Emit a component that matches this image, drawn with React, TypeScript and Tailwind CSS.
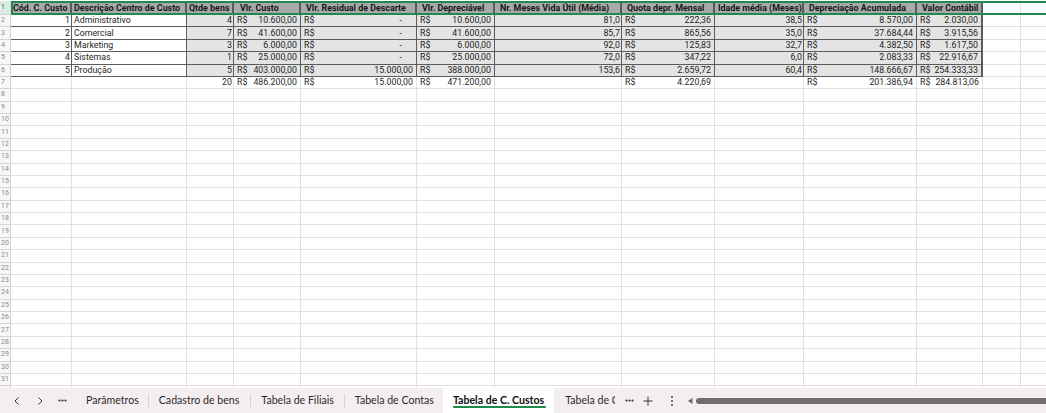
import React from "react";

const cols =
  "grid grid-cols-[11px_61px_115px_47px_67px_116px_78px_127px_93px_89px_113px_66px_38px_1fr]";

type Row = {
  cod: string;
  desc: string;
  qtde: string;
  custo: string;
  residual: string;
  deprec: string;
  meses: string;
  quota: string;
  idade: string;
  acum: string;
  contabil: string;
};

const rows: Row[] = [
  { cod: "1", desc: "Administrativo", qtde: "4", custo: "10.600,00", residual: "-", deprec: "10.600,00", meses: "81,0", quota: "222,36", idade: "38,5", acum: "8.570,00", contabil: "2.030,00" },
  { cod: "2", desc: "Comercial", qtde: "7", custo: "41.600,00", residual: "-", deprec: "41.600,00", meses: "85,7", quota: "865,56", idade: "35,0", acum: "37.684,44", contabil: "3.915,56" },
  { cod: "3", desc: "Marketing", qtde: "3", custo: "6.000,00", residual: "-", deprec: "6.000,00", meses: "92,0", quota: "125,83", idade: "32,7", acum: "4.382,50", contabil: "1.617,50" },
  { cod: "4", desc: "Sistemas", qtde: "1", custo: "25.000,00", residual: "-", deprec: "25.000,00", meses: "72,0", quota: "347,22", idade: "6,0", acum: "2.083,33", contabil: "22.916,67" },
  { cod: "5", desc: "Produção", qtde: "5", custo: "403.000,00", residual: "15.000,00", deprec: "388.000,00", meses: "153,6", quota: "2.659,72", idade: "60,4", acum: "148.666,67", contabil: "254.333,33" },
];

const headers = [
  { t: "Cód. C. Custo", p: "pl-[2px]" },
  { t: "Descrição Centro de Custo", p: "pl-[2px]" },
  { t: "Qtde bens", p: "pl-[2px]" },
  { t: "Vlr. Custo", p: "pl-[6px]" },
  { t: "Vlr. Residual de Descarte", p: "pl-[5px]" },
  { t: "Vlr. Depreciável", p: "pl-[5px]" },
  { t: "Nr. Meses Vida Útil (Média)", p: "pl-[5px]" },
  { t: "Quota depr. Mensal", p: "pl-[5px]" },
  { t: "Idade média (Meses)", p: "pl-[3px]" },
  { t: "Depreciação Acumulada", p: "pl-[5px]" },
  { t: "Valor Contábil", p: "pl-[5px]" },
];

function RowNum({ n, active }: { n: number; active?: boolean }) {
  return (
    <div
      className={
        "flex items-center pl-[1px] text-[7px] border-r border-b border-[#d4d4d4] " +
        (active ? "bg-[#dcebe1] text-[#1e7b45]" : "bg-[#f7f7f7] text-[#8a8a8a]")
      }
    >
      {n}
    </div>
  );
}

function Money({ v, dash, gray, total }: { v: string; dash?: boolean; gray?: boolean; total?: boolean }) {
  return (
    <div
      className={
        "flex justify-between items-center pl-[3px] pr-[3px] whitespace-nowrap " +
        (total ? "border-r border-b border-[#e2e2e2] " : "border-r border-b border-[#5c5c5c] ") +
        (gray ? "bg-[#e4e4e4]" : "")
      }
    >
      <span>R$</span>
      <span className={dash ? "pr-[11px]" : ""}>{v}</span>
    </div>
  );
}

function Num({ v, gray, left, total }: { v: string; gray?: boolean; left?: boolean; total?: boolean }) {
  return (
    <div
      className={
        "flex items-center whitespace-nowrap overflow-hidden " +
        (left ? "pl-[2px] " : "justify-end pr-[1px] ") +
        (total ? "border-r border-b border-[#e2e2e2] " : "border-r border-b border-[#5c5c5c] ") +
        (gray ? "bg-[#e4e4e4]" : "")
      }
    >
      {v}
    </div>
  );
}

function Blank() {
  return <div className="border-r border-b border-[#e2e2e2]" />;
}

function Dots() {
  return (
    <svg width="9" height="3" viewBox="0 0 9 3">
      <circle cx="1.5" cy="1.5" r="1.1" fill="#333" />
      <circle cx="4.5" cy="1.5" r="1.1" fill="#333" />
      <circle cx="7.5" cy="1.5" r="1.1" fill="#333" />
    </svg>
  );
}

export default function App() {
  const empty = Array.from({ length: 25 }, (_, i) => i + 8);
  return (
    <div
      className="w-[1046px] h-[413px] overflow-hidden bg-white flex flex-col text-[#1f1f1f]"
      style={{ fontFamily: "Roboto, 'Liberation Sans', sans-serif" }}
    >
      <div className="flex-1 overflow-hidden pt-[1px] text-[8.8px] leading-none">
        {/* header row */}
        <div className={cols + " h-[14px] relative"}>
          <RowNum n={1} active />
          {headers.map((h, i) => (
            <div
              key={i}
              className={
                "flex items-center font-bold text-[8.9px] whitespace-nowrap overflow-hidden bg-[#a9a9a9] text-[#161616] border-r-2 border-[#5a5a5a] " +
                h.p
              }
            >
              {h.t}
            </div>
          ))}
          <div className="bg-white border-r border-[#e2e2e2]" />
          <div className="bg-white" />
          <div className="absolute left-[11px] right-0 top-0 bottom-0 border-y-2 border-l-2 border-[#1e8a4c] pointer-events-none" />
        </div>

        {rows.map((r, i) => (
          <div key={i} className={cols + " h-[12.38px]"}>
            <RowNum n={i + 2} />
            <Num v={r.cod} />
            <Num v={r.desc} left />
            <Num v={r.qtde} gray />
            <Money v={r.custo} gray />
            <Money v={r.residual} dash={r.residual === "-"} gray />
            <Money v={r.deprec} gray />
            <Num v={r.meses} gray />
            <Money v={r.quota} gray />
            <Num v={r.idade} gray />
            <Money v={r.acum} gray />
            <div className="flex justify-between items-center pl-[3px] pr-[3px] whitespace-nowrap bg-[#e4e4e4] border-b border-[#5c5c5c] border-r-2 border-r-[#5a5a5a]">
              <span>R$</span>
              <span>{r.contabil}</span>
            </div>
            <Blank />
            <div className="border-b border-[#e2e2e2]" />
          </div>
        ))}

        {/* totals */}
        <div className={cols + " h-[12.38px]"}>
          <RowNum n={7} />
          <Blank />
          <Blank />
          <Num v="20" total />
          <Money v="486.200,00" total />
          <Money v="15.000,00" total />
          <Money v="471.200,00" total />
          <Blank />
          <Money v="4.220,69" total />
          <Blank />
          <Money v="201.386,94" total />
          <Money v="284.813,06" total />
          <Blank />
          <div className="border-b border-[#e2e2e2]" />
        </div>

        {empty.map((n) => (
          <div key={n} className={cols + " h-[12.38px]"}>
            <RowNum n={n} />
            {Array.from({ length: 12 }, (_, j) => (
              <Blank key={j} />
            ))}
            <div className="border-b border-[#e2e2e2]" />
          </div>
        ))}
      </div>

      {/* sheet tabs */}
      <div
        className="h-[25px] shrink-0 bg-[#f4eef1] flex items-center text-[10.6px] text-[#2b2b2b]"
        style={{ fontFamily: "Lato, 'Noto Sans', sans-serif" }}
      >
        <svg width="8" height="10" viewBox="0 0 8 10" className="ml-[13px]">
          <path d="M5.5 1.5 L2 5 L5.5 8.5" fill="none" stroke="#333" strokeWidth="1" />
        </svg>
        <svg width="8" height="10" viewBox="0 0 8 10" className="ml-[15px]">
          <path d="M2.5 1.5 L6 5 L2.5 8.5" fill="none" stroke="#333" strokeWidth="1" />
        </svg>
        <span className="ml-[14px] flex">
          <Dots />
        </span>
        <span className="ml-[19px]">Parâmetros</span>
        <span className="ml-[9px] w-px h-[13px] bg-[#d6cfd3]" />
        <span className="ml-[10px]">Cadastro de bens</span>
        <span className="ml-[11px] w-px h-[13px] bg-[#d6cfd3]" />
        <span className="ml-[10px]">Tabela de Filiais</span>
        <span className="ml-[10px] w-px h-[13px] bg-[#d6cfd3]" />
        <span className="ml-[10px]">Tabela de Contas</span>
        <div className="ml-[9px] h-full bg-white px-[10px] flex flex-col justify-center relative">
          <span className="font-bold text-[#111]">Tabela de C. Custos</span>
          <span className="absolute left-[10px] right-[8px] bottom-[5px] h-[2px] bg-[#1e8a4c] rounded" />
        </div>
        <span className="ml-[11px] w-[50px] overflow-hidden whitespace-nowrap">Tabela de Custos</span>
        <span className="ml-[10px] flex">
          <Dots />
        </span>
        <svg width="10" height="10" viewBox="0 0 10 10" className="ml-[9px]">
          <path d="M5 0.5 V9.5 M0.5 5 H9.5" stroke="#333" strokeWidth="1" />
        </svg>
        <svg width="4" height="12" viewBox="0 0 4 12" className="ml-[17px]">
          <circle cx="2" cy="2" r="1" fill="#444" />
          <circle cx="2" cy="6" r="1" fill="#444" />
          <circle cx="2" cy="10" r="1" fill="#444" />
        </svg>
        <svg width="5" height="6" viewBox="0 0 5 6" className="ml-[14px]">
          <path d="M4.5 0 L0 3 L4.5 6 Z" fill="#666" />
        </svg>
        <div className="ml-[3px] flex-1 h-[6px] bg-[#6e6e6e] rounded-l-full" />
      </div>
    </div>
  );
}
